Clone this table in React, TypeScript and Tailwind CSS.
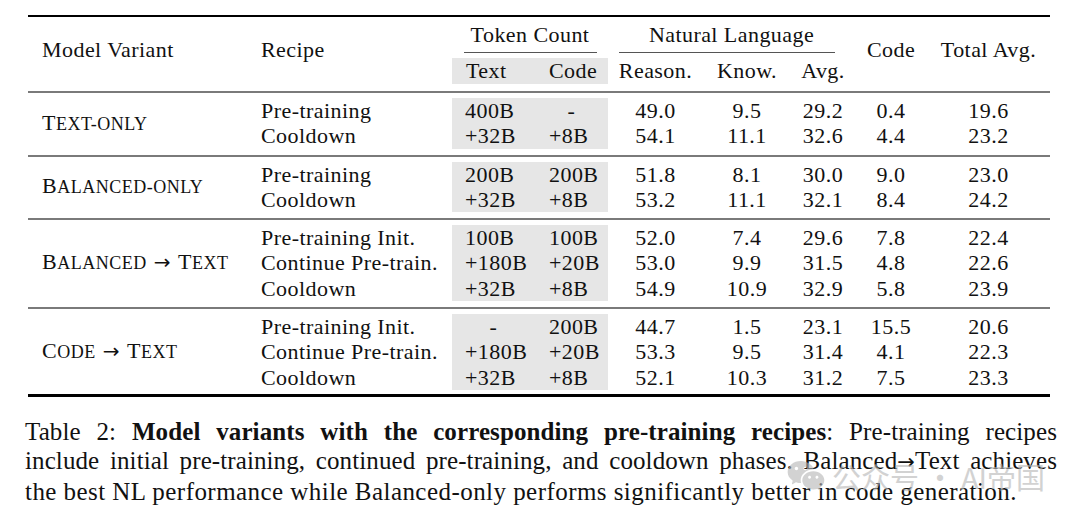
import { RiWechatFill } from "react-icons/ri";

type Row = { recipe: string; text: string; code: string; nums: string[] };
type Group = { name: string[]; rows: Row[] };

// name parts: capital letters stay full size, lowercase parts become small caps
const groups: Group[] = [
  {
    name: ["T", "ext-only"],
    rows: [
      { recipe: "Pre-training", text: "400B", code: "-", nums: ["49.0", "9.5", "29.2", "0.4", "19.6"] },
      { recipe: "Cooldown", text: "+32B", code: "+8B", nums: ["54.1", "11.1", "32.6", "4.4", "23.2"] },
    ],
  },
  {
    name: ["B", "alanced-only"],
    rows: [
      { recipe: "Pre-training", text: "200B", code: "200B", nums: ["51.8", "8.1", "30.0", "9.0", "23.0"] },
      { recipe: "Cooldown", text: "+32B", code: "+8B", nums: ["53.2", "11.1", "32.1", "8.4", "24.2"] },
    ],
  },
  {
    name: ["B", "alanced", "→", "T", "ext"],
    rows: [
      { recipe: "Pre-training Init.", text: "100B", code: "100B", nums: ["52.0", "7.4", "29.6", "7.8", "22.4"] },
      { recipe: "Continue Pre-train.", text: "+180B", code: "+20B", nums: ["53.0", "9.9", "31.5", "4.8", "22.6"] },
      { recipe: "Cooldown", text: "+32B", code: "+8B", nums: ["54.9", "10.9", "32.9", "5.8", "23.9"] },
    ],
  },
  {
    name: ["C", "ode", "→", "T", "ext"],
    rows: [
      { recipe: "Pre-training Init.", text: "-", code: "200B", nums: ["44.7", "1.5", "23.1", "15.5", "20.6"] },
      { recipe: "Continue Pre-train.", text: "+180B", code: "+20B", nums: ["53.3", "9.5", "31.4", "4.1", "22.3"] },
      { recipe: "Cooldown", text: "+32B", code: "+8B", nums: ["52.1", "10.3", "31.2", "7.5", "23.3"] },
    ],
  },
];

// widths of the five numeric columns
const numCols = ["w-[95px]", "w-[88px]", "w-[64px]", "w-[72px]", "w-[123px]"];

function SmallCaps({ parts }: { parts: string[] }) {
  return (
    <span className="tracking-[0.5px]">
      {parts.map((p, i) => {
        if (p === "→")
          return (
            <span key={i} className="mx-[7px] font-['DejaVu_Sans',sans-serif] text-[20px]">
              →
            </span>
          );
        if (p[0] === p[0].toUpperCase()) return <span key={i}>{p}</span>;
        return (
          <span key={i} className="text-[18px] uppercase">
            {p}
          </span>
        );
      })}
    </span>
  );
}

function Cell({ v, pad }: { v: string; pad: string }) {
  if (v === "-") return <div className="h-[25.3px] text-center">-</div>;
  return <div className={`h-[25.3px] ${pad}`}>{v}</div>;
}

export default function App() {
  return (
    <div className="relative h-[518px] w-[1080px] overflow-hidden bg-white font-['Liberation_Serif','DejaVu_Serif',serif] text-[#111]">
      <div className="ml-[28px] w-[1022px] pt-[15px] text-[22px] leading-[25.3px] tracking-[0.02em]">
        <div className="h-[2px] bg-black" />

        {/* header */}
        <div className="flex h-[74px]">
          <div className="w-[222px] pl-[14px] pt-[20px]">Model Variant</div>
          <div className="w-[202px] pl-[11px] pt-[20px]">Recipe</div>
          <div className="flex w-[156px] flex-col pt-[5px]">
            <div className="h-[25px] text-center">Token Count</div>
            <div className="ml-[12px] mr-[11px] mt-[5px] h-px bg-[#555]" />
            <div className="mt-[5px] flex h-[26px] bg-[#e6e6e6] leading-[26px]">
              <div className="w-[83px] pl-[14px]">Text</div>
              <div className="w-[73px] pl-[14px]">Code</div>
            </div>
          </div>
          <div className="flex w-[247px] flex-col pt-[5px]">
            <div className="h-[25px] text-center">Natural Language</div>
            <div className="ml-[11px] mr-[20px] mt-[5px] h-px bg-[#555]" />
            <div className="mt-[5px] flex h-[26px] leading-[26px]">
              <div className="w-[95px] text-center">Reason.</div>
              <div className="w-[88px] text-center">Know.</div>
              <div className="w-[64px] text-center">Avg.</div>
            </div>
          </div>
          <div className="w-[72px] pt-[20px] text-center">Code</div>
          <div className="w-[123px] pt-[20px] text-center">Total Avg.</div>
        </div>

        {groups.map((g) => (
          <div key={g.name.join("")}>
            <div className="h-[2px] bg-[#7a7a7a]" />
            <div className="flex pb-[6px] pt-[5px]">
              <div className="flex w-[222px] items-center whitespace-nowrap pl-[14px]">
                <SmallCaps parts={g.name} />
              </div>
              <div className="w-[202px] pl-[11px]">
                {g.rows.map((r) => (
                  <div key={r.recipe} className="h-[25.3px]">
                    {r.recipe}
                  </div>
                ))}
              </div>
              <div className="flex w-[156px] bg-[#e6e6e6]">
                <div className="w-[83px]">
                  {g.rows.map((r, i) => (
                    <Cell key={i} v={r.text} pad="pl-[13px]" />
                  ))}
                </div>
                <div className="w-[73px]">
                  {g.rows.map((r, i) => (
                    <Cell key={i} v={r.code} pad="pl-[14px]" />
                  ))}
                </div>
              </div>
              {numCols.map((w, c) => (
                <div key={c} className={`${w} text-center`}>
                  {g.rows.map((r, i) => (
                    <div key={i} className="h-[25.3px]">
                      {r.nums[c]}
                    </div>
                  ))}
                </div>
              ))}
            </div>
          </div>
        ))}
        <div className="-mt-[2px] h-[3px] bg-black" />
      </div>

      {/* caption */}
      <div className="ml-[25px] mt-[20px] w-[1032px] text-[25px] leading-[29px]">
        <div className="whitespace-nowrap text-justify tracking-[0.004em] [text-align-last:justify]">
          Table 2: <b>Model variants with the corresponding pre-training recipes</b>: Pre-training recipes
        </div>
        <div className="whitespace-nowrap text-justify tracking-[0.004em] [text-align-last:justify]">
          include initial pre-training, continued pre-training, and cooldown phases. Balanced
          <span className="font-['DejaVu_Sans',sans-serif] text-[21px]">→</span>Text achieves
        </div>
        <div className="whitespace-nowrap tracking-[0.018em]">
          the best NL performance while Balanced-only performs significantly better in code generation.
        </div>
      </div>

      {/* watermark */}
      <div className="absolute left-[786px] top-[456px] flex items-center gap-[6px] opacity-60">
        <RiWechatFill className="h-[40px] w-[40px] text-[#b5b5b5]" />
        <span className="font-['Noto_Sans_CJK_SC','Noto_Sans',sans-serif] text-[29px] leading-[34px] text-[#b5b5b5]">
          公众号 · AI帝国
        </span>
      </div>
    </div>
  );
}
